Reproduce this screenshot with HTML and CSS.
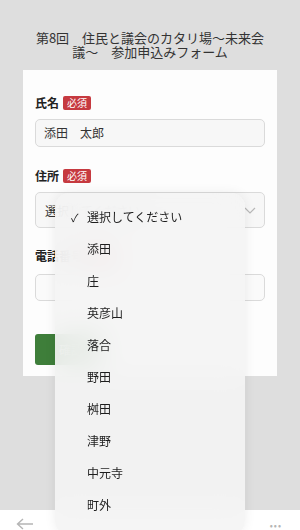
FILE: index.html
```html
<!DOCTYPE html>
<html lang="ja">
<head>
<meta charset="utf-8">
<title>参加申込みフォーム</title>
<link rel="stylesheet" href="styles.css">
</head>
<body>
<div class="screen">
  <main class="page">
    <h1 class="title">第8回　住民と議会のカタリ場～未来会議～　参加申込みフォーム</h1>
    <form class="card">
      <div class="field">
        <div class="label">氏名<span class="req">必須</span></div>
        <div class="input">添田　太郎</div>
      </div>
      <div class="field field-addr">
        <div class="label">住所<span class="req">必須</span></div>
        <div class="select">
          <span>選択してください</span>
          <svg class="chev" width="12" height="7" viewBox="0 0 12 7"><path d="M1 1l5 5 5-5" fill="none" stroke="#b8b8b8" stroke-width="1.2"/></svg>
        </div>
      </div>
      <div class="field field-tel">
        <div class="label">電話番号<span class="req">必須</span></div>
        <div class="input input-tel"></div>
      </div>
      <div class="actions">
        <span class="btn">確認</span>
      </div>
    </form>
  </main>
  <nav class="toolbar">
    <svg width="18" height="12" viewBox="0 0 18 12"><path d="M7 1L1.5 6 7 11M1.5 6H17" fill="none" stroke="#b5b5b5" stroke-width="1.4"/></svg>
    <span class="dots">•••</span>
  </nav>
  <div class="picker">
    <ul class="options">
      <li class="opt sel"><span class="check">✓</span>選択してください</li>
      <li class="opt">添田</li>
      <li class="opt">庄</li>
      <li class="opt">英彦山</li>
      <li class="opt">落合</li>
      <li class="opt">野田</li>
      <li class="opt">桝田</li>
      <li class="opt">津野</li>
      <li class="opt">中元寺</li>
      <li class="opt">町外</li>
    </ul>
  </div>
</div>
</body>
</html>
```
FILE: styles.css
```css
* { box-sizing: border-box; }
html, body {
  margin: 0;
  padding: 0;
  width: 300px;
  height: 530px;
  overflow: hidden;
  font-family: "Noto Sans CJK JP", "Noto Sans", sans-serif;
  color: #333;
}
.screen {
  position: relative;
  width: 300px;
  height: 530px;
  overflow: hidden;
  display: flex;
  flex-direction: column;
}
.page {
  height: 510px;
  flex: none;
  background: #dedede;
  padding: 31px 23px 0;
}
.title {
  margin: 0 auto;
  width: 232px;
  font-size: 13px;
  line-height: 14px;
  font-weight: 400;
  text-align: center;
  color: #333;
}
.card {
  margin-top: 11px;
  background: #fdfdfd;
  padding: 25px 12px 11px;
}
.field { display: flex; flex-direction: column; }
.label {
  display: flex;
  align-items: center;
  font-size: 12px;
  font-weight: 700;
  line-height: 16px;
  height: 16px;
  color: #222;
}
.req {
  margin-left: 4px;
  background: #c63a40;
  color: #fff;
  font-size: 10px;
  font-weight: 400;
  line-height: 14px;
  height: 14px;
  padding: 0 4px;
  border-radius: 2px;
}
.input {
  margin-top: 8px;
  height: 28px;
  border: 1px solid #dadada;
  border-radius: 5px;
  background: #f7f7f7;
  font-size: 12px;
  line-height: 26px;
  padding: 0 8px;
  color: #333;
}
.field-addr { margin-top: 21px; }
.select {
  margin-top: 8px;
  height: 36px;
  border: 1px solid #dadada;
  border-radius: 5px;
  background: #f7f7f7;
  font-size: 12px;
  padding: 0 8px 0 9px;
  display: flex;
  align-items: center;
  justify-content: space-between;
  color: #333;
}
.field-tel { margin-top: 20px; }
.input-tel { margin-top: 10px; height: 27px; background: #fafafa; }
.actions { margin-top: 33px; display: flex; }
.btn {
  width: 64px;
  height: 31px;
  border-radius: 3px;
  background: #3e7e3a;
  color: #fff;
  font-size: 12px;
  line-height: 31px;
  padding-left: 8px;
  text-align: center;
}
.toolbar {
  flex: none;
  height: 40px;
  background: #fff;
  display: flex;
  justify-content: space-between;
  align-items: flex-start;
  padding: 8px 18px 0 16px;
}
.dots {
  color: #b5b5b5;
  font-size: 9px;
  letter-spacing: 1px;
  line-height: 16px;
}
.picker {
  position: absolute;
  left: 55px;
  top: 193px;
  width: 190px;
  height: 342px;
  border-radius: 14px;
  background: rgba(244, 244, 244, 0.9);
  -webkit-backdrop-filter: blur(14px);
  backdrop-filter: blur(14px);
  box-shadow: 0 0 12px rgba(0, 0, 0, 0.07);
}
.options {
  list-style: none;
  margin: 0;
  padding: 8px 0 0;
}
.opt {
  height: 32px;
  line-height: 32px;
  font-size: 12px;
  color: #1e1e1e;
  padding-left: 32px;
  position: relative;
}
.check {
  position: absolute;
  left: 16px;
  top: 0;
  font-size: 11px;
}
```
